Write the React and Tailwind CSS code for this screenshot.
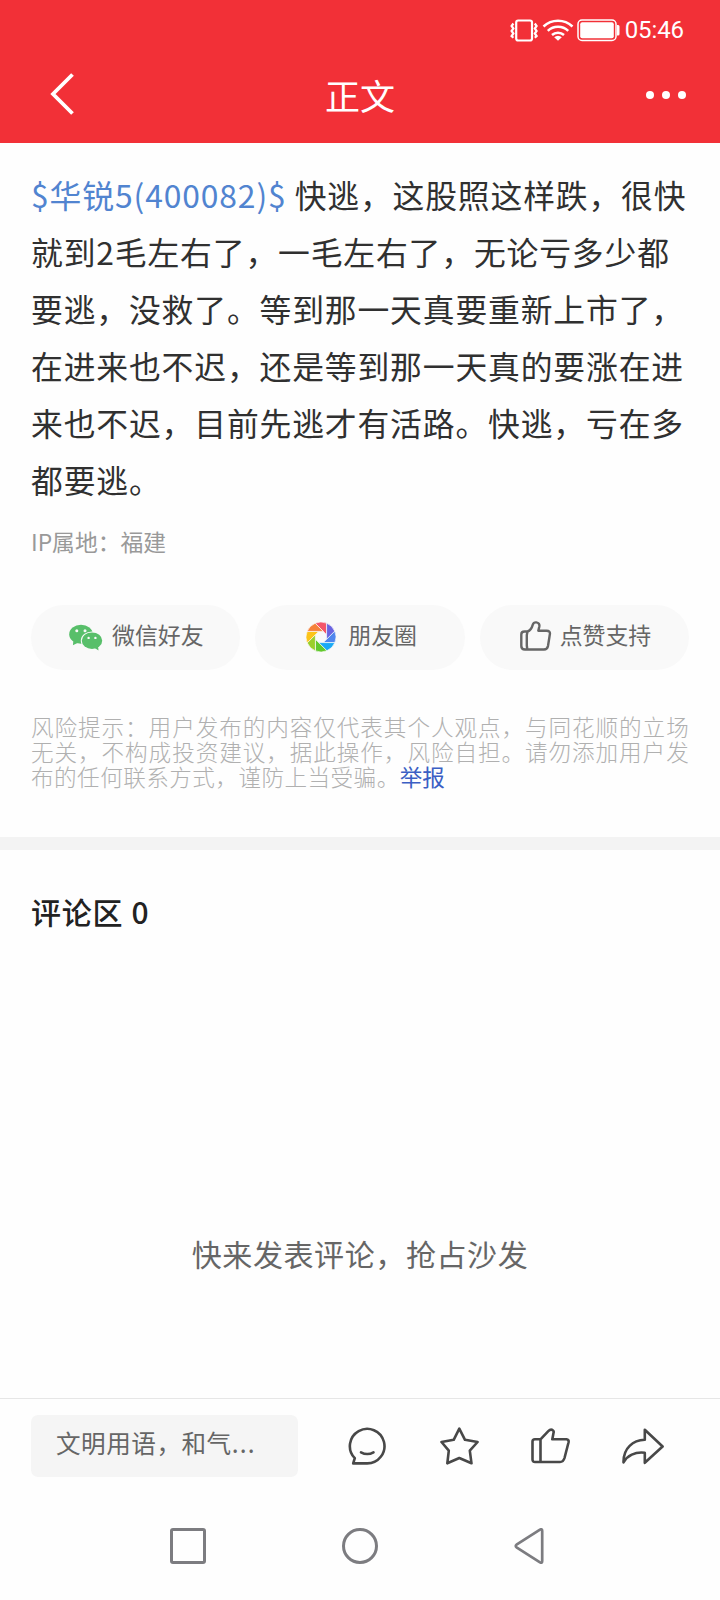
const POST_LINES = [
  "就到2毛左右了，一毛左右了，无论亏多少都",
  "要逃，没救了。等到那一天真要重新上市了，",
  "在进来也不迟，还是等到那一天真的要涨在进",
  "来也不迟，目前先逃才有活路。快逃，亏在多",
  "都要逃。",
];

// Aperture blades, clockwise from the top
const BLADES = [
  "#f4566a",
  "#6a63e0",
  "#4f86ee",
  "#1aa9f5",
  "#62c92c",
  "#9bcf2a",
  "#fcc419",
  "#f5813a",
];

export default function App() {
  return (
    <div className="flex h-[1600px] w-[720px] flex-col overflow-hidden bg-[#fefefe] font-['Noto_Sans_CJK_SC',sans-serif] text-[#303030]">
      <header className="h-[143px] shrink-0 bg-[#f23037] text-white">
        <StatusBar />
        <TitleBar />
      </header>

      <main className="flex flex-1 flex-col">
        <article className="px-[31px] pt-[23px]">
          <p className="text-[31.8px] leading-[57px] tracking-[0.85px] whitespace-nowrap">
            <a className="tracking-[0.9px] text-[#5184d0]">$华锐5(400082)$</a>
            <span className="ml-[8px]">快逃，这股照这样跌，很快</span>
            {POST_LINES.map((line) => (
              <span key={line} className="block">
                {line}
              </span>
            ))}
          </p>
          <p className="mt-[17px] text-[22.8px] leading-[34px] text-[#999]">
            IP属地：福建
          </p>
        </article>

        <ShareRow />

        <div className="mt-[45px] px-[31px] text-[22.6px] leading-[24.9px] font-light whitespace-nowrap text-[#b0b0b0]">
          <p className="tracking-[0.93px]">
            风险提示：用户发布的内容仅代表其个人观点，与同花顺的立场
          </p>
          <p className="tracking-[0.93px]">
            无关，不构成投资建议，据此操作，风险自担。请勿添加用户发
          </p>
          <p className="tracking-[0.45px]">
            布的任何联系方式，谨防上当受骗。
            <a className="font-normal tracking-normal text-[#3b5fc4]">举报</a>
          </p>
        </div>

        <div className="mt-[47px] h-[13px] bg-[#f3f3f3]" />

        <section className="flex flex-1 flex-col">
          <h2 className="mt-[41px] px-[31px] text-[30px] leading-[40px] font-medium tracking-[0.7px] text-[#222]">
            评论区 <span className="ml-px">0</span>
          </h2>
          <p className="mt-[302px] text-center text-[30px] leading-[40px] tracking-[0.6px] text-[#666]">
            快来发表评论，抢占沙发
          </p>
        </section>
      </main>

      <CommentBar />
      <SystemNav />
    </div>
  );
}

function StatusBar() {
  return (
    <div className="flex h-[60px] items-center justify-end pr-[36px]">
      <svg width="28" height="23" viewBox="0 0 28 23" fill="none" stroke="#fff">
        <rect x="6.2" y="1.5" width="15.8" height="20" rx="2" strokeWidth="2.2" />
        <path
          d="M3.4 4.5L1.6 7l1.8 2.5L1.6 12l1.8 2.5L1.6 17l1.8 1.7M24.8 4.5L26.6 7l-1.8 2.5l1.8 2.5l-1.8 2.5l1.8 2.5l-1.8 1.7"
          strokeWidth="2.2"
        />
      </svg>
      <svg
        className="ml-[4px]"
        width="32"
        height="24"
        viewBox="0 0 32 24"
        fill="none"
        stroke="#fff"
        strokeWidth="2.5"
      >
        <path d="M1.5 8.5a21 21 0 0 1 29 0" />
        <path d="M5.8 12.8a15 15 0 0 1 20.4 0" />
        <path d="M10 17a9 9 0 0 1 12 0" />
        <path d="M16 22.8l-3.8-3.6a5.5 5.5 0 0 1 7.6 0z" fill="#fff" stroke="none" />
      </svg>
      <svg className="ml-[3px]" width="43" height="23" viewBox="0 0 43 23">
        <rect x="1" y="1" width="38" height="20.5" rx="4" fill="none" stroke="#fff" strokeWidth="1.5" />
        <rect x="3.2" y="3.2" width="33.6" height="16.1" rx="2" fill="#fff" />
        <path d="M40 6h1.2q1.3 0 1.3 1.5v7.5q0 1.5-1.3 1.5H40z" fill="#fff" />
      </svg>
      <span className="ml-[5px] font-['Roboto',sans-serif] text-[24px] leading-none tracking-[-0.1px]">
        05:46
      </span>
    </div>
  );
}

function TitleBar() {
  return (
    <div className="grid h-[68px] grid-cols-3 items-center">
      <svg
        className="ml-[49px]"
        width="25"
        height="42"
        viewBox="0 0 25 42"
        fill="none"
        stroke="#fff"
        strokeWidth="3.8"
      >
        <path d="M23.5 1.5L4 21l19.5 19.5" />
      </svg>
      <h1 className="mt-[2px] text-center text-[35px] leading-[50px]">正文</h1>
      <div className="mt-[2px] flex justify-end gap-[8px] pr-[34px]">
        <i className="size-[8px] rounded-full bg-white" />
        <i className="size-[8px] rounded-full bg-white" />
        <i className="size-[8px] rounded-full bg-white" />
      </div>
    </div>
  );
}

function ShareRow() {
  const pill =
    "flex h-[65px] items-center rounded-full bg-[#f9f9f9] text-[22.9px] leading-[34px] text-[#666] whitespace-nowrap";
  return (
    <div className="mt-[46px] grid grid-cols-3 gap-[15px] px-[31px]">
      <button className={`${pill} pl-[38px]`}>
        <WechatIcon />
        <span className="-mt-[7px] ml-[9px]">微信好友</span>
      </button>
      <button className={`${pill} pl-[51px]`}>
        <MomentsIcon />
        <span className="-mt-[7px] ml-[12px]">朋友圈</span>
      </button>
      <button className={`${pill} pl-[40px]`}>
        <svg
          className="-mt-[3px]"
          width="32"
          height="30"
          viewBox="0 0 32 30"
          fill="none"
          stroke="#666"
          strokeWidth="2.4"
          strokeLinejoin="round"
        >
          <path d="M7.5 10.5C10.5 9.5 12 6.5 12.8 3.6Q13.6 1.2 16.2 1.4Q20 2 19.3 5.6L18.3 9.7H26.5Q30.4 9.8 29.9 13L28 25Q27.3 28.5 24 28.5H5Q1.3 28.5 1.3 25V13.5Q1.3 10.5 4.5 10.5ZM7.5 10.5L6.8 14V24.5L7.3 28.5" />
        </svg>
        <span className="-mt-[7px] ml-[8px]">点赞支持</span>
      </button>
    </div>
  );
}

function WechatIcon() {
  return (
    <svg className="-mt-px" width="34" height="27" viewBox="0 0 34 27">
      <g fill="#58bf6a">
        <ellipse cx="12" cy="10.2" rx="11.8" ry="9.5" />
        <path d="M4.5 16L3.9 21.2L9.5 18.5z" />
      </g>
      <ellipse cx="23" cy="16.7" rx="11.2" ry="9.3" fill="#f9f9f9" />
      <g fill="#58bf6a">
        <ellipse cx="23" cy="16.7" rx="10.2" ry="8.3" />
        <path d="M25 23.5L29.5 26.5L29 21.5z" />
      </g>
      <g fill="#f9f9f9">
        <circle cx="7.8" cy="6.8" r="1.5" />
        <circle cx="16" cy="6.8" r="1.5" />
        <circle cx="19.6" cy="13.9" r="1.2" />
        <circle cx="26.4" cy="13.9" r="1.2" />
      </g>
    </svg>
  );
}

function MomentsIcon() {
  return (
    <svg className="-mt-[2px]" width="30" height="30" viewBox="-15 -15 30 30">
      {BLADES.map((color, i) => (
        <path
          key={color}
          d="M-5.9-13.8A15 15 0 0 1 5.6-13.9V-2.3z"
          fill={color}
          stroke="#f9f9f9"
          strokeWidth="0.7"
          transform={`rotate(${i * 45})`}
        />
      ))}
    </svg>
  );
}

function CommentBar() {
  return (
    <div className="flex h-[95px] shrink-0 items-start border-t border-[#e6e6e6] pt-[16px] pl-[31px]">
      <div className="h-[62px] w-[267px] rounded-[7px] bg-[#f5f5f5] pl-[25px] text-[24.6px] leading-[55px] tracking-[0.5px] whitespace-nowrap text-[#666]">
        文明用语，和气<span className="tracking-[1.2px]">...</span>
      </div>
      <div className="mt-[11.5px] ml-[50px] flex text-[#484848] [&_svg]:fill-none [&_svg]:stroke-current [&_svg]:stroke-[2.6px]">
        <svg width="39" height="39" viewBox="0 0 39 39" strokeLinejoin="round" strokeLinecap="round">
          <path d="M19 36.4H5.2L6.8 31.2A17.3 17.3 0 1 1 19 36.4Z" />
          <path d="M13 25.3Q19.3 28.8 25.5 25.3" />
        </svg>
        <svg className="ml-[53px]" width="39" height="39" viewBox="0 0 39 39" strokeLinejoin="round">
          <path d="M19.3 1.7L25 12.8L37.6 15L29.8 23.7L31.5 36.3L19.3 31L7.3 36.3L8.8 23.7L1.5 15L13.7 12.8Z" />
        </svg>
        <svg className="mt-[1.5px] ml-[52px]" width="39" height="36" viewBox="0 0 39 36" strokeLinejoin="round">
          <path d="M9.5 11.3L17.3 3.2Q19.5 1 21.5 2Q23.2 3 22.5 5L21.3 11.3H35.5Q38.2 11.5 37.5 14.5L33.5 30Q32.3 34 29 34H4Q1.5 34 1.5 31.5V13.5Q1.5 11.3 4 11.3ZM9.5 11.3V34" />
        </svg>
        <svg className="mt-px ml-[52px]" width="42" height="37" viewBox="0 0 42 37" strokeLinejoin="round">
          <path d="M22.8 1.7L40.6 18.5L22.8 34.8V24.8C13 23.5 5 28 1.5 34.3C1.3 20 11 12.3 22.8 11.8Z" />
        </svg>
      </div>
    </div>
  );
}

function SystemNav() {
  return (
    <nav className="flex h-[107px] shrink-0 items-start pt-[35px] pl-[170px]">
      <div className="size-[36px] rounded-[3px] border-[3px] border-[#7c7c80]" />
      <div className="ml-[136px] size-[36px] rounded-full border-[3px] border-[#7c7c80]" />
      <svg
        className="ml-[136px]"
        width="30"
        height="36"
        viewBox="0 0 30 36"
        fill="none"
        stroke="#7c7c80"
        strokeWidth="2.7"
        strokeLinejoin="round"
      >
        <path d="M26 1.6Q28.2 0.5 28.2 3V33Q28.2 35.5 26 34.4L2.5 19.3Q1 18 2.5 16.7Z" />
      </svg>
    </nav>
  );
}
